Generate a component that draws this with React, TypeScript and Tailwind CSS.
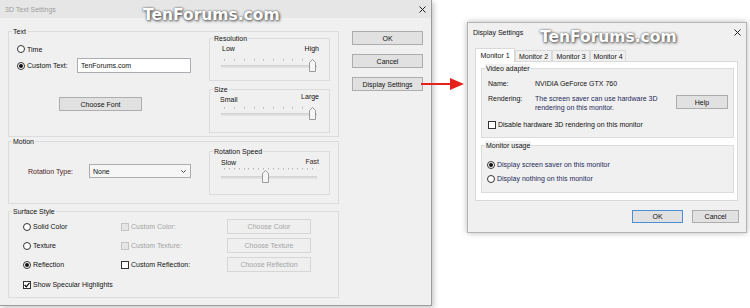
import React from "react";

const T = "text-[7px] leading-[9px]";

function Radio({ checked = false }: { checked?: boolean }) {
  return (
    <span className="w-[8px] h-[8px] rounded-full border border-[#333] bg-white flex items-center justify-center shrink-0">
      {checked && <span className="w-[4px] h-[4px] rounded-full bg-[#111]" />}
    </span>
  );
}

function Check({ checked = false, disabled = false }: { checked?: boolean; disabled?: boolean }) {
  return (
    <span
      className={
        disabled
          ? "w-[8px] h-[8px] border border-[#c4c4c4] bg-[#e6e6e6] shrink-0 flex items-center justify-center"
          : "w-[8px] h-[8px] border border-[#333] bg-white shrink-0 flex items-center justify-center"
      }
    >
      {checked && (
        <svg width="6" height="6" viewBox="0 0 6 6" className="block">
          <path d="M0.6 3 L2.3 4.8 L5.5 0.8" stroke="#111" strokeWidth="1.3" fill="none" />
        </svg>
      )}
    </span>
  );
}

function Btn({
  children,
  className = "",
  disabled = false,
  focus = false,
}: {
  children: React.ReactNode;
  className?: string;
  disabled?: boolean;
  focus?: boolean;
}) {
  const look = disabled
    ? "border-[#d6d6d6] bg-[#efefef] text-[#a5a5a5]"
    : focus
    ? "border-[#4a8fd6] bg-[#e1e1e1] text-[#111]"
    : "border-[#adadad] bg-[#e1e1e1] text-[#111]";
  return (
    <button type="button" className={`flex items-center justify-center border shrink-0 ${T} ${look} ${className}`}>
      {children}
    </button>
  );
}

function Group({
  label,
  className = "",
  children,
}: {
  label: string;
  className?: string;
  children?: React.ReactNode;
}) {
  return (
    <div className={`relative border border-[#dcdcdc] ${className}`}>
      <span className={`absolute left-[3px] -top-[5px] px-[1px] bg-[#f0f0f0] text-[#111] ${T}`}>{label}</span>
      {children}
    </div>
  );
}

function Slider({ ticks, thumb, drop = 0 }: { ticks: number[]; thumb: number; drop?: number }) {
  return (
    <svg width="100" height="16" viewBox="0 0 100 16" className="block">
      {ticks.map((t, i) => (
        <rect key={i} x={t} y={1} width={1} height={1.5} fill="#b5b5b5" />
      ))}
      <rect x={2.5} y={7.5 + drop} width={95} height={1.5} fill="#e6e6e6" stroke="#d3d3d3" strokeWidth={1} />
      <path
        d={`M${thumb - 3} ${13.5 + drop} V${4.5 + drop} L${thumb} ${1.5 + drop} L${thumb + 3} ${4.5 + drop} V${13.5 + drop} Z`}
        fill="#f4f4f4"
        stroke="#9b9b9b"
        strokeWidth={1}
      />
    </svg>
  );
}

function CloseX() {
  return (
    <svg width="7" height="7" viewBox="0 0 7 7" className="block">
      <path d="M0.5 0.5 L6.5 6.5 M6.5 0.5 L0.5 6.5" stroke="#222" strokeWidth="1" />
    </svg>
  );
}

const resTicks = [5, 15, 25, 35, 44, 54, 64, 73, 83, 93];
const rotTicks = Array.from({ length: 19 }, (_, i) => Math.round(5 + (i * 88) / 18));

function LeftWindow() {
  return (
    <div className="w-[432px] h-[306px] flex flex-col shrink-0 border-r border-b border-[#9c9c9c] bg-[#f0f0f0] shadow-[2px_2px_5px_rgba(0,0,0,0.22)] text-[#111]">
      <div className="h-[18px] bg-[#e6e6e6] flex items-center justify-between pl-[5px] pr-[5px]">
        <span className={`${T} text-[#9d9d9d]`}>3D Text Settings</span>
        <CloseX />
      </div>
      <div className="flex pl-[8px] pt-[13px]">
        <div className="w-[331px] flex flex-col">
          <Group label="Text" className="h-[106px] flex">
            <div className="w-[200px] flex flex-col pl-[8px]">
              <div className={`mt-[12px] h-[10px] flex items-center gap-[2px] ${T}`}>
                <Radio />
                <span>Time</span>
              </div>
              <div className={`mt-[4px] h-[15px] flex items-center ${T}`}>
                <div className="w-[60px] flex items-center gap-[2px]">
                  <Radio checked />
                  <span>Custom Text:</span>
                </div>
                <div className="w-[114px] h-[15px] border border-[#abadb3] bg-white flex items-center pl-[3px]">
                  TenForums.com
                </div>
              </div>
              <Btn className="mt-[24px] ml-[42px] w-[83px] h-[14px]">Choose Font</Btn>
            </div>
            <div className="w-[121px] flex flex-col">
              <Group label="Resolution" className="mt-[6px] h-[43px]">
                <div className={`flex justify-between pl-[12px] pr-[10px] mt-[5px] h-[9px] ${T}`}>
                  <span>Low</span>
                  <span>High</span>
                </div>
                <div className="ml-[9px] mt-[5px]">
                  <Slider ticks={resTicks} thumb={93.5} />
                </div>
              </Group>
              <Group label="Size" className="mt-[8px] h-[44px]">
                <div className={`flex justify-between pl-[10px] pr-[10px] mt-[2px] h-[12px] ${T}`}>
                  <span className="self-end">Small</span>
                  <span className="self-start">Large</span>
                </div>
                <div className="ml-[9px] mt-[2px]">
                  <Slider ticks={resTicks} thumb={93.5} />
                </div>
              </Group>
            </div>
          </Group>

          <Group label="Motion" className="mt-[4px] h-[63px] flex">
            <div className="w-[200px] flex flex-col pl-[19px]">
              <div className={`mt-[22px] h-[14px] flex items-center ${T}`}>
                <span className="w-[61px] text-[#4e2020]">Rotation Type:</span>
                <div className="w-[102px] h-[14px] border border-[#acacac] bg-[#f6f6f6] flex items-center justify-between pl-[3px] pr-[4px]">
                  <span>None</span>
                  <svg width="5" height="3" viewBox="0 0 5 3" className="block">
                    <path d="M0.3 0.3 L2.5 2.5 L4.7 0.3" stroke="#333" strokeWidth="0.9" fill="none" />
                  </svg>
                </div>
              </div>
            </div>
            <div className="w-[121px] flex flex-col">
              <Group label="Rotation Speed" className="mt-[9px] h-[44px]">
                <div className={`flex justify-between pl-[11px] pr-[10px] mt-[5px] h-[10px] ${T}`}>
                  <span className="self-end">Slow</span>
                  <span className="self-start text-[#3a1f1f]">Fast</span>
                </div>
                <div className="ml-[9px]">
                  <Slider ticks={rotTicks} thumb={46.5} drop={2} />
                </div>
              </Group>
            </div>
          </Group>

          <Group label="Surface Style" className="mt-[7px] h-[87px]">
            <div className={`flex flex-col gap-[4px] mt-[7px] pl-[14px] ${T}`}>
              <div className="flex items-center h-[15px]">
                <div className="w-[98px] flex items-center gap-[2px]">
                  <Radio />
                  <span>Solid Color</span>
                </div>
                <div className="w-[106px] flex items-center gap-[2px] text-[#a3a3a3]">
                  <Check disabled />
                  <span>Custom Color:</span>
                </div>
                <Btn disabled className="w-[84px] h-[15px]">Choose Color</Btn>
              </div>
              <div className="flex items-center h-[15px]">
                <div className="w-[98px] flex items-center gap-[2px]">
                  <Radio />
                  <span>Texture</span>
                </div>
                <div className="w-[106px] flex items-center gap-[2px] text-[#a3a3a3]">
                  <Check disabled />
                  <span>Custom Texture:</span>
                </div>
                <Btn disabled className="w-[84px] h-[15px]">Choose Texture</Btn>
              </div>
              <div className="flex items-center h-[15px]">
                <div className="w-[98px] flex items-center gap-[2px]">
                  <Radio checked />
                  <span>Reflection</span>
                </div>
                <div className="w-[106px] flex items-center gap-[2px]">
                  <Check />
                  <span>Custom Reflection:</span>
                </div>
                <Btn disabled className="w-[84px] h-[15px]">Choose Reflection</Btn>
              </div>
              <div className="flex items-center h-[15px] mt-[1px] gap-[2px]">
                <Check checked />
                <span>Show Specular Highlights</span>
              </div>
            </div>
          </Group>
        </div>

        <div className="ml-[13px] w-[71px] flex flex-col gap-[9px]">
          <Btn className="w-[71px] h-[14px]">OK</Btn>
          <Btn className="w-[71px] h-[14px]">Cancel</Btn>
          <Btn className="w-[71px] h-[14px]">Display Settings</Btn>
        </div>
      </div>
    </div>
  );
}

function RightDialog() {
  const navy = "text-[#1f2a5c]";
  return (
    <div className="ml-[35px] mt-[22px] w-[280px] h-[211px] border border-[#b4b4b4] bg-[#f0f0f0] shadow-[0_0_6px_rgba(0,0,0,0.28)] flex flex-col shrink-0 text-[#111]">
      <div className="h-[18px] flex items-center justify-between pl-[5px] pr-[5px]">
        <span className={T}>Display Settings</span>
        <CloseX />
      </div>
      <div className="ml-[7px] mt-[7px] w-[263px] flex flex-col">
        <div className={`flex items-end h-[14px] -mb-[1px] ${T}`}>
          <div className="relative z-10 w-[40px] h-[14px] border-t border-l border-r border-[#d9d9d9] bg-white flex items-center justify-center">
            Monitor 1
          </div>
          <div className="w-[37px] h-[12px] border-t border-l border-r border-[#d9d9d9] bg-[#f0f0f0] flex items-center justify-center">
            Monitor 2
          </div>
          <div className="w-[38px] h-[12px] border-t border-l border-r border-[#d9d9d9] bg-[#f0f0f0] flex items-center justify-center">
            Monitor 3
          </div>
          <div className="w-[36px] h-[12px] border-t border-l border-r border-[#d9d9d9] bg-[#f0f0f0] flex items-center justify-center">
            Monitor 4
          </div>
        </div>
        <div className="w-[263px] h-[140px] border border-[#d9d9d9] bg-white flex flex-col">
          <Group label="Video adapter" className="ml-[5px] mt-[6px] w-[253px] h-[70px] bg-[#f0f0f0]">
            <div className={`flex flex-col pl-[6px] ${T}`}>
              <div className="mt-[10px] h-[9px] flex items-center">
                <span className="w-[47px]">Name:</span>
                <span>NVIDIA GeForce GTX 760</span>
              </div>
              <div className="mt-[6px] flex items-start">
                <span className="w-[47px]">Rendering:</span>
                <div className={`w-[130px] flex flex-col ${navy}`}>
                  <span>The screen saver can use hardware 3D</span>
                  <span>rendering on this monitor.</span>
                </div>
                <Btn className="ml-auto mr-[5px] mt-[1px] w-[52px] h-[14px]">Help</Btn>
              </div>
              <div className="mt-[8px] h-[9px] flex items-center gap-[2px]">
                <Check />
                <span>Disable hardware 3D rendering on this monitor</span>
              </div>
            </div>
          </Group>
          <Group label="Monitor usage" className="ml-[5px] mt-[7px] w-[253px] h-[48px] bg-[#f0f0f0]">
            <div className={`flex flex-col pl-[5px] ${T}`}>
              <div className="mt-[14px] h-[9px] flex items-center gap-[2px]">
                <Radio checked />
                <span className={navy}>Display screen saver on this monitor</span>
              </div>
              <div className="mt-[5px] h-[9px] flex items-center gap-[2px]">
                <Radio />
                <span className={navy}>Display nothing on this monitor</span>
              </div>
            </div>
          </Group>
        </div>
      </div>
      <div className="flex justify-end mt-[9px] mr-[7px] gap-[9px]">
        <Btn focus className="w-[51px] h-[13px]">OK</Btn>
        <Btn className="w-[47px] h-[13px]">Cancel</Btn>
      </div>
    </div>
  );
}

const wm =
  "absolute font-['DejaVu_Sans',sans-serif] font-bold text-[15.5px] leading-none text-white [text-shadow:0_0_2px_#5a5a5a,1px_1px_3px_#444] pointer-events-none";

export default function App() {
  return (
    <div className="relative w-[750px] h-[308px] bg-white overflow-hidden flex items-start font-['Liberation_Sans',Arial,sans-serif]">
      <LeftWindow />
      <RightDialog />
      <svg
        className="absolute left-[420px] top-[76px] block"
        width="46"
        height="16"
        viewBox="0 0 46 16"
      >
        <rect x="1" y="7" width="32" height="2" fill="#e3221c" />
        <path d="M30 2 L44 8 L30 14 Z" fill="#e3221c" />
      </svg>
      <div className={`${wm} left-[143px] top-[8px]`}>TenForums.com</div>
      <div className={`${wm} left-[540px] top-[30px]`}>TenForums.com</div>
    </div>
  );
}
